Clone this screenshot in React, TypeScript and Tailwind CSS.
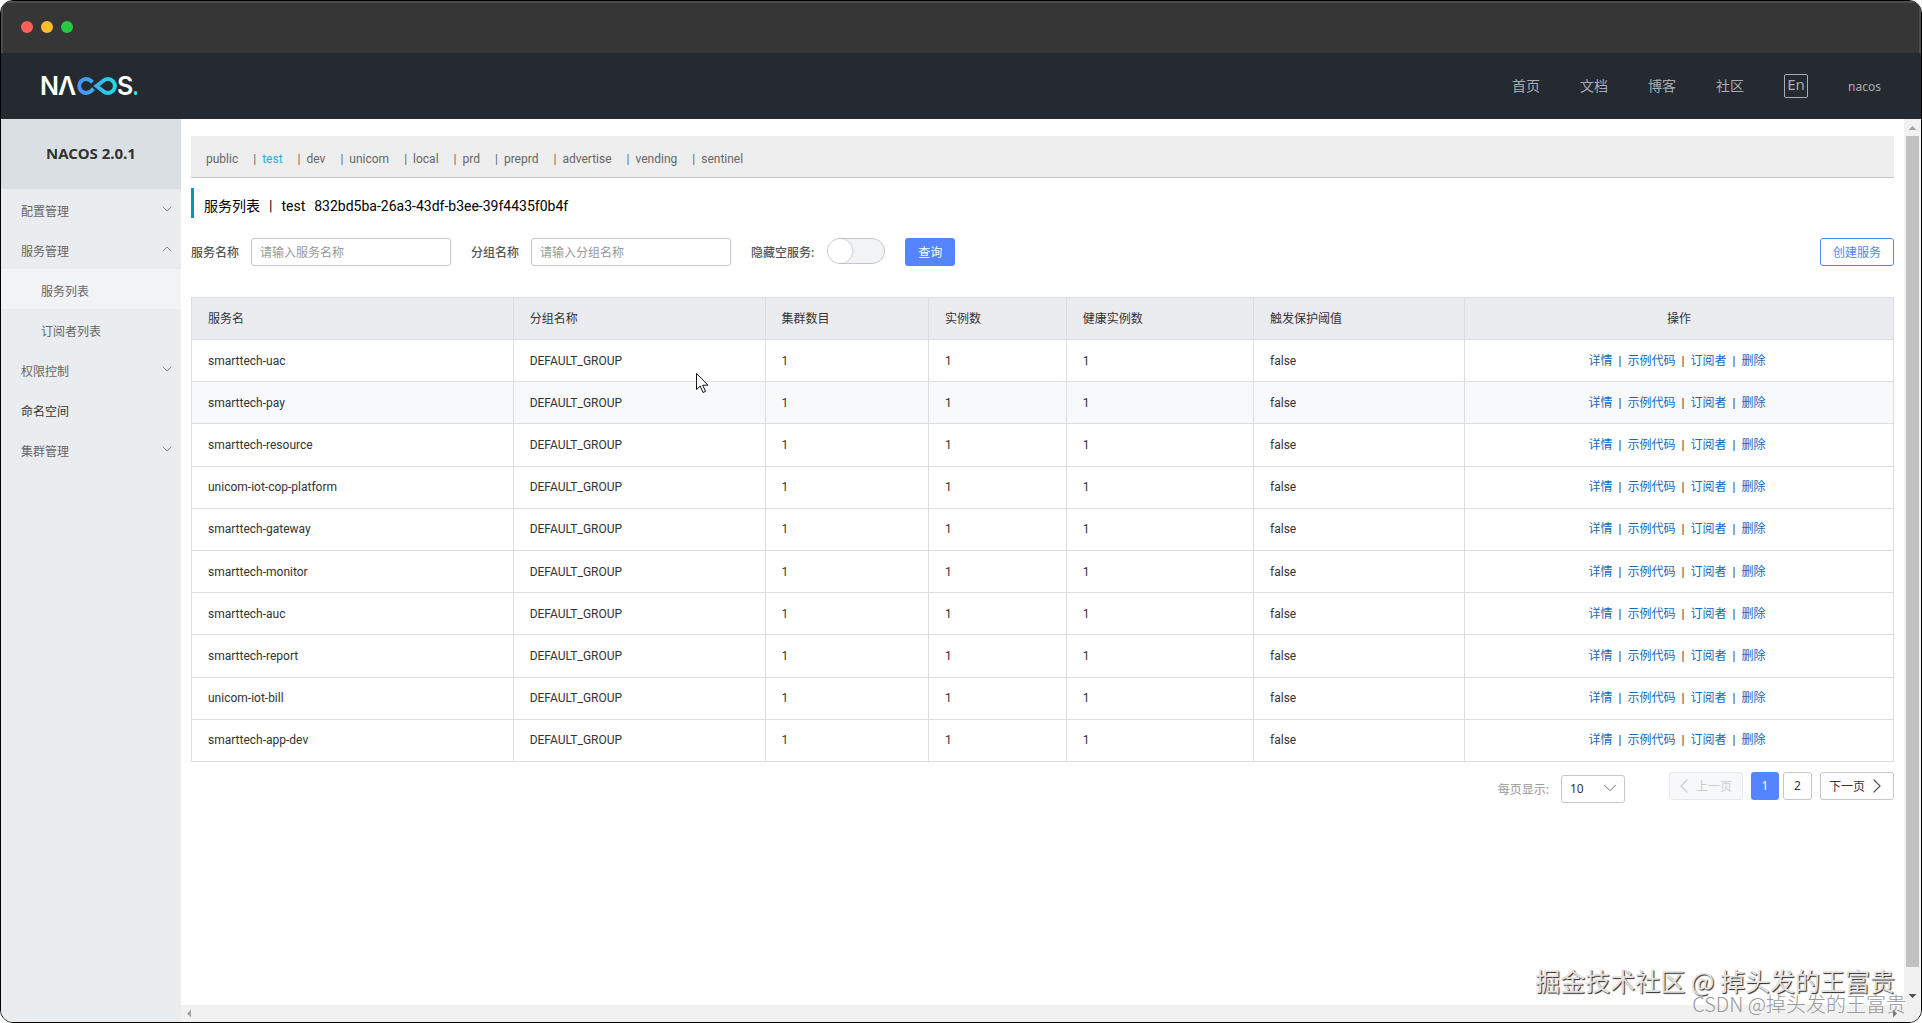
import { useState } from "react";
import { ChevronDown, ChevronLeft, ChevronRight, ChevronUp } from "lucide-react";

const namespaces = ["public", "test", "dev", "unicom", "local", "prd", "preprd", "advertise", "vending", "sentinel"];

const services = [
  "smarttech-uac",
  "smarttech-pay",
  "smarttech-resource",
  "unicom-iot-cop-platform",
  "smarttech-gateway",
  "smarttech-monitor",
  "smarttech-auc",
  "smarttech-report",
  "unicom-iot-bill",
  "smarttech-app-dev",
];

const actions = ["详情", "示例代码", "订阅者", "删除"];

function Logo() {
  return (
    <svg width="106" height="36" viewBox="-4 -8 106 36" role="img" aria-label="NACOS" className="font-['Inter',sans-serif]">
      <defs>
        <linearGradient id="loop" x1="36" x2="77" y1="0" y2="0" gradientUnits="userSpaceOnUse">
          <stop offset="0" stopColor="#4a8cf7" />
          <stop offset="1" stopColor="#22dfe0" />
        </linearGradient>
      </defs>
      <g fill="#fff" fontSize="25" fontWeight="600">
        <text x="-1" y="19">N</text>
        <text x="17" y="19">Λ</text>
        <text x="76" y="19">S</text>
      </g>
      <path
        d="M51.500 6.200L50.200 5.100A7 7 0 1 0 50.200 14.900L52.500 12.700M55.500 10L62 5A7 7 0 1 1 62 15Z"
        fill="none"
        stroke="url(#loop)"
        strokeWidth="4"
      />
      <rect x="93" y="15" width="3" height="4" rx="1" fill="#22dfe0" />
    </svg>
  );
}

function TopBar() {
  return (
    <header className="flex h-[66px] shrink-0 items-center justify-between bg-[#252a31] pl-9 pr-10 text-[#a9adb1]">
      <a href="#" className="block">
        <Logo />
      </a>
      <nav className="flex items-center gap-10 text-sm">
        <a href="#">首页</a>
        <a href="#">文档</a>
        <a href="#">博客</a>
        <a href="#">社区</a>
        <button className="flex size-6 items-center justify-center rounded-xs border border-[#a9adb1] pb-[3px] text-[15px] leading-none">
          En
        </button>
        <a href="#" className="pt-[2px] text-xs">nacos</a>
      </nav>
    </header>
  );
}

function MenuItem({ label, open, plain }: { label: string; open?: boolean; plain?: boolean }) {
  return (
    <li>
      <a href="#" className={`flex h-10 items-center justify-between pl-5 pr-[6px] ${plain ? "text-[#333]" : "text-[#666]"}`}>
        <span className="pt-[6px]">{label}</span>
        {!plain && (open ? <ChevronUp size={16} strokeWidth={1.5} color="#888" /> : <ChevronDown size={16} strokeWidth={1.5} color="#888" />)}
      </a>
    </li>
  );
}

function Sidebar() {
  return (
    <aside className="w-[180px] shrink-0 bg-[#e9edef] text-xs">
      <h1 className="flex h-[70px] items-center justify-center bg-[#d9dfe2] pb-[2px] text-[15px] font-bold text-[#333]">NACOS 2.0.1</h1>
      <ul>
        <MenuItem label="配置管理" />
        <MenuItem label="服务管理" open />
        <li>
          <a href="#" className="flex h-10 items-center bg-[#f1f3f6] pl-10 pt-[6px] text-[#666]">服务列表</a>
        </li>
        <li>
          <a href="#" className="flex h-10 items-center pl-10 pt-[6px] text-[#666]">订阅者列表</a>
        </li>
        <MenuItem label="权限控制" />
        <MenuItem label="命名空间" plain />
        <MenuItem label="集群管理" />
      </ul>
    </aside>
  );
}

function SearchForm() {
  const [hideEmpty, setHideEmpty] = useState(false);

  return (
    <form className="mt-5 flex h-7 items-center text-xs text-[#555]" onSubmit={(e) => e.preventDefault()}>
      <label htmlFor="serviceName" className="pt-[2px] font-medium">服务名称</label>
      <input
        id="serviceName"
        placeholder="请输入服务名称"
        className="ml-3 h-7 w-[200px] rounded-[3px] border border-[#c4c6cf] px-2 outline-none placeholder:text-[#999]"
      />
      <label htmlFor="groupName" className="ml-5 pt-[2px] font-medium">分组名称</label>
      <input
        id="groupName"
        placeholder="请输入分组名称"
        className="ml-3 h-7 w-[200px] rounded-[3px] border border-[#c4c6cf] px-2 outline-none placeholder:text-[#999]"
      />
      <label htmlFor="hideEmpty" className="ml-5 pt-[2px] font-medium">隐藏空服务:</label>
      <input
        id="hideEmpty"
        type="checkbox"
        checked={hideEmpty}
        onChange={(e) => setHideEmpty(e.target.checked)}
        className="ml-[13px] h-[26px] w-[58px] appearance-none self-start rounded-full border border-[#c4c6cf] bg-[#f2f3f7] before:block before:size-6 before:rounded-full before:bg-white before:shadow-[1px_0_2px_rgba(0,0,0,0.15)] checked:bg-[#5584ff] checked:before:ml-8"
      />
      <button type="submit" className="ml-5 h-7 w-[50px] rounded-[3px] bg-[#5584ff] pt-[2px] text-white">查询</button>
      <button type="button" className="ml-auto h-7 w-[74px] rounded-[3px] border border-[#5584ff] pt-[2px] text-[#5584ff]">
        创建服务
      </button>
    </form>
  );
}

function ServiceTable() {
  return (
    <table className="mt-[31px] h-[465px] w-full table-fixed border-collapse text-left font-['Roboto','Noto_Sans_CJK_SC',sans-serif] text-xs text-[#333] [&_td]:h-[42px] [&_td]:border [&_td]:border-[#dcdee3] [&_td]:px-4 [&_th]:h-[42px] [&_th]:border [&_th]:border-[#dcdee3] [&_th]:px-4">
      <colgroup>
        <col className="w-[18.9%]" />
        <col className="w-[14.8%]" />
        <col className="w-[9.6%]" />
        <col className="w-[8.1%]" />
        <col className="w-[11%]" />
        <col className="w-[12.4%]" />
        <col className="w-[25.2%]" />
      </colgroup>
      <thead>
        <tr className="bg-[#ebecf0] [&>th]:font-normal">
          <th>服务名</th>
          <th>分组名称</th>
          <th>集群数目</th>
          <th>实例数</th>
          <th>健康实例数</th>
          <th>触发保护阈值</th>
          <th className="text-center">操作</th>
        </tr>
      </thead>
      <tbody>
        {services.map((name, i) => (
          <tr key={name} className={i === 1 ? "bg-[#f7f9fa]" : ""}>
            <td>{name}</td>
            <td>DEFAULT_GROUP</td>
            <td>1</td>
            <td>1</td>
            <td>1</td>
            <td>false</td>
            <td>
              <div className="flex items-center justify-center pr-1">
                {actions.map((action, j) => (
                  <span key={action} className="flex items-center">
                    {j > 0 && <span className="mx-[6px]">|</span>}
                    <a href="#" className="text-[#0f6ac0]">{action}</a>
                  </span>
                ))}
              </div>
            </td>
          </tr>
        ))}
      </tbody>
    </table>
  );
}

function Pagination() {
  return (
    <div className="mt-[10px] flex items-start justify-end text-xs text-[#333]">
      <label htmlFor="pageSize" className="mt-[10px] text-[#999]">每页显示:</label>
      <div className="relative ml-3 mt-[3px]">
        <select id="pageSize" className="h-7 w-16 appearance-none rounded-[3px] border border-[#c4c6cf] bg-white pl-2">
          <option>10</option>
          <option>20</option>
          <option>30</option>
          <option>50</option>
          <option>100</option>
        </select>
        <ChevronDown size={22} strokeWidth={1} color="#666" className="pointer-events-none absolute right-1 top-[2px]" />
      </div>
      <button disabled className="ml-11 flex h-7 w-[74px] items-center justify-center rounded-[3px] border border-[#e6e7eb] bg-[#f7f8fa] pr-2 text-[#ccc]">
        <ChevronLeft size={24} strokeWidth={1.2} />
        <span className="pt-[2px]">上一页</span>
      </button>
      <button className="ml-2 size-7 rounded-[3px] bg-[#5584ff] text-white">1</button>
      <button className="ml-1 h-7 w-[29px] rounded-[3px] border border-[#c4c6cf]">2</button>
      <button className="ml-2 flex h-7 w-[74px] items-center justify-center rounded-[3px] border border-[#c4c6cf] pl-1">
        <span className="pt-[2px]">下一页</span>
        <ChevronRight size={24} strokeWidth={1.2} color="#555" />
      </button>
    </div>
  );
}

function Content() {
  const [current, setCurrent] = useState("test");

  return (
    <main className="min-w-0 flex-1 overflow-hidden px-[10px] pt-[17px]">
      <div className="flex h-[42px] items-center border-b border-[#c7c7c7] bg-[#eee] pl-[15px] pt-1 font-['Roboto',sans-serif] text-xs text-[#666]">
        {namespaces.map((ns, i) => (
          <div key={ns} className="flex items-center">
            {i > 0 && <span className="mr-[6px]">|</span>}
            <button onClick={() => setCurrent(ns)} className={`mr-[15px] ${ns === current ? "text-[#1fb0dd]" : ""}`}>
              {ns}
            </button>
          </div>
        ))}
      </div>

      <h2 className="mt-[10px] flex h-[30px] items-end gap-[9px] border-l-3 border-[#0d93b9] pl-[10px] font-['Roboto','Noto_Sans_CJK_SC',sans-serif] text-sm leading-6 text-black">
        <span>服务列表</span>
        <span>|</span>
        <span>test</span>
        <span>832bd5ba-26a3-43df-b3ee-39f4435f0b4f</span>
      </h2>

      <SearchForm />
      <ServiceTable />
      <Pagination />
    </main>
  );
}

function Watermark() {
  return (
    <div className="pointer-events-none absolute bottom-[7px] right-[15px] flex flex-col items-end font-['Noto_Sans_CJK_SC',sans-serif]">
      <p className="mr-[11px] text-[25px] leading-[23px] text-[#e2e2e2] [text-shadow:1px_1px_1px_#222]">掘金技术社区 @ 掉头发的王富贵</p>
      <p className="text-xl leading-[23px] font-light text-[#999]">CSDN @掉头发的王富贵</p>
    </div>
  );
}

export default function App() {
  return (
    <div className="bg-white font-['Noto_Sans','Noto_Sans_CJK_SC',sans-serif]">
      <div className="relative flex h-screen flex-col overflow-hidden rounded-[13px] border border-black bg-white">
        <div className="flex h-[52px] shrink-0 items-center gap-2 border-x-2 border-t-2 border-[#4c4c4c] bg-[#363636] pb-[2px] pl-[18px]">
          <span className="size-3 rounded-full bg-[#ff5f57]" />
          <span className="size-3 rounded-full bg-[#febc2e]" />
          <span className="size-3 rounded-full bg-[#28c840]" />
        </div>
        <TopBar />
        <div className="flex min-h-0 flex-1">
          <Sidebar />
          <div className="flex min-w-0 flex-1 flex-col">
            <div className="flex min-h-0 flex-1">
              <Content />
              {/* vertical scrollbar */}
              <div className="flex w-[17px] shrink-0 flex-col items-center bg-[#f1f1f1]">
                <svg width="17" height="17" viewBox="0 0 17 17" className="shrink-0">
                  <path d="M4.500 11L8.500 7L12.500 11Z" fill="#a3a3a3" />
                </svg>
                <div className="w-[13px] flex-1 bg-[#c1c1c1]" />
                <svg width="17" height="38" viewBox="0 0 17 38" className="shrink-0">
                  <path d="M4.500 27L8.500 31L12.500 27Z" fill="#505050" />
                </svg>
              </div>
            </div>
            {/* horizontal scrollbar */}
            <div className="flex h-[17px] shrink-0 items-center justify-between bg-[#f1f1f1] pl-1 pr-[22px]">
              <svg width="9" height="9" viewBox="0 0 9 9">
                <path d="M6 0.500L2 4.500L6 8.500Z" fill="#a3a3a3" />
              </svg>
              <svg width="9" height="9" viewBox="0 0 9 9">
                <path d="M3 0.500L7 4.500L3 8.500Z" fill="#777" />
              </svg>
            </div>
          </div>
        </div>
        <Watermark />
        {/* mouse pointer */}
        <svg width="13" height="21" viewBox="0 0 13 21" className="pointer-events-none absolute left-[695px] top-[372px]">
          <path d="M0.500 0.500V16.500L4.200 13L7 19.500L9.500 18.400L6.700 12.200H12Z" fill="#fff" stroke="#111" />
        </svg>
      </div>
    </div>
  );
}
